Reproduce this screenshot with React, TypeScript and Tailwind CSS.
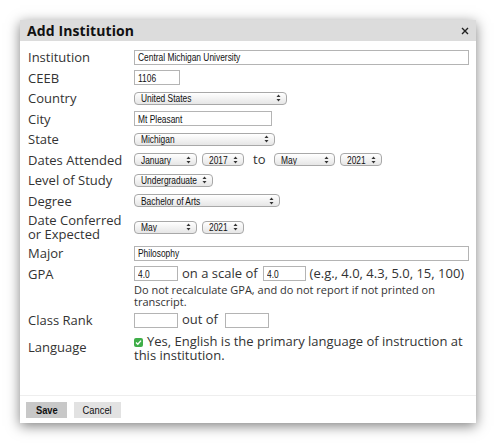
import React from 'react';

const labelFont = { fontFamily: '"Open Sans", "Liberation Sans", sans-serif' };

function Arrows() {
  return (
    <svg width="5" height="8" viewBox="0 0 5 8" className="shrink-0">
      <path d="M2.5 0.5 L4.5 3 L0.5 3 Z" fill="#333" />
      <path d="M2.5 7.5 L4.5 5 L0.5 5 Z" fill="#333" />
    </svg>
  );
}

function Select({ value, width }: { value: string; width: string }) {
  return (
    <div
      className={`${width} h-[13px] shrink-0 flex items-center pl-[6px] pr-[5px] rounded-[4px] border border-[#a8a8a8] bg-gradient-to-b from-white to-[#e6e6e6] text-[10.5px] leading-none text-[#111] font-['Liberation_Sans',Arial,sans-serif]`}
    >
      <div className="flex-1 min-w-0 overflow-hidden whitespace-nowrap">
        <span className="inline-block origin-left scale-x-[0.8]">{value}</span>
      </div>
      <Arrows />
    </div>
  );
}

function Input({ value, width }: { value?: string; width: string }) {
  return (
    <div
      className={`${width} h-[15px] shrink-0 flex items-center px-[3px] overflow-hidden whitespace-nowrap border border-[#b4b4b4] bg-white text-[10.5px] leading-none text-[#111] font-['Liberation_Sans',Arial,sans-serif]`}
    >
      <span className="inline-block origin-left scale-x-[0.8]">{value}</span>
    </div>
  );
}

function Row({ label, children, h = 'h-[20.5px]' }: { label: React.ReactNode; children: React.ReactNode; h?: string }) {
  return (
    <div className={`flex items-center ${h}`}>
      <div className="w-[106px] shrink-0 text-[13px] leading-[14px] text-[#333]" style={labelFont}>
        {label}
      </div>
      <div className="flex items-center">{children}</div>
    </div>
  );
}

export default function App() {
  return (
    <div className="w-[496px] h-[443px] bg-white pt-[20px] pl-[20px]">
      <div className="w-[456px] h-[403px] flex flex-col bg-white shadow-[0_3px_12px_rgba(0,0,0,0.5)]">
        {/* Header */}
        <div className="h-[21px] shrink-0 flex items-center justify-between pl-[7px] pr-[7px] bg-[#dcdcdc]">
          <span className="text-[14px] font-bold text-[#111] tracking-[0.1px]" style={labelFont}>
            Add Institution
          </span>
          <svg width="8" height="8" viewBox="0 0 8 8">
            <path d="M1 1 L7 7 M7 1 L1 7" stroke="#222" strokeWidth="1.4" />
          </svg>
        </div>

        {/* Body */}
        <div className="flex-1 pl-[8px] pt-[6px]">
          <Row label="Institution">
            <Input value="Central Michigan University" width="w-[335px]" />
          </Row>
          <Row label="CEEB">
            <Input value="1106" width="w-[46px]" />
          </Row>
          <Row label="Country">
            <Select value="United States" width="w-[153px]" />
          </Row>
          <Row label="City">
            <Input value="Mt Pleasant" width="w-[138px]" />
          </Row>
          <Row label="State">
            <Select value="Michigan" width="w-[141px]" />
          </Row>
          <Row label="Dates Attended">
            <div className="flex items-center gap-[5px]">
              <Select value="January" width="w-[63px]" />
              <Select value="2017" width="w-[42px]" />
              <span className="text-[13px] text-[#333] mx-[4px]" style={labelFont}>
                to
              </span>
              <Select value="May" width="w-[61px]" />
              <Select value="2021" width="w-[42px]" />
            </div>
          </Row>
          <Row label="Level of Study">
            <Select value="Undergraduate" width="w-[79px]" />
          </Row>
          <Row label="Degree">
            <Select value="Bachelor of Arts" width="w-[146px]" />
          </Row>
          <Row
            h="h-[32px]"
            label={
              <>
                Date Conferred
                <br />
                or Expected
              </>
            }
          >
            <div className="flex items-center gap-[5px]">
              <Select value="May" width="w-[63px]" />
              <Select value="2021" width="w-[42px]" />
            </div>
          </Row>
          <Row label="Major">
            <Input value="Philosophy" width="w-[335px]" />
          </Row>
          <Row label="GPA">
            <div className="flex items-center text-[13px] text-[#333]" style={labelFont}>
              <Input value="4.0" width="w-[44px]" />
              <span className="ml-[4px] mr-[5px]">on a scale of</span>
              <Input value="4.0" width="w-[43px]" />
              <span className="ml-[4px]">(e.g., 4.0, 4.3, 5.0, 15, 100)</span>
            </div>
          </Row>
          <div
            className="ml-[106px] w-[320px] text-[11px] leading-[12px] text-[#333]"
            style={labelFont}
          >
            Do not recalculate GPA, and do not report if not printed on transcript.
          </div>
          <Row label="Class Rank" h="h-[24px]">
            <div className="flex items-center text-[13px] text-[#333]" style={labelFont}>
              <Input width="w-[44px]" />
              <span className="ml-[4px] mr-[7px]">out of</span>
              <Input width="w-[44px]" />
            </div>
          </Row>
          <div className="flex items-center mt-[2px]">
            <div className="w-[106px] shrink-0 text-[13px] text-[#333]" style={labelFont}>
              Language
            </div>
            <div className="w-[332px] text-[13px] leading-[14px] text-[#333]" style={labelFont}>
              <span className="inline-flex items-center justify-center w-[9px] h-[9px] mr-[4px] rounded-[2px] bg-[#3fae49]">
                <svg width="7" height="7" viewBox="0 0 7 7">
                  <path d="M1 3.6 L2.8 5.3 L6 1.6" stroke="white" strokeWidth="1.4" fill="none" />
                </svg>
              </span>
              Yes, English is the primary language of instruction at this institution.
            </div>
          </div>
        </div>

        {/* Footer */}
        <div className="h-[28px] shrink-0 flex items-start gap-[7px] pl-[6px] pt-[6px] border-t border-[#eeeeee]">
          <button className="w-[41px] h-[16px] flex items-center justify-center bg-[#c8c8c8] text-[11px] font-bold text-[#111] font-['Liberation_Sans',Arial,sans-serif]">
            <span className="inline-block scale-x-[0.85]">Save</span>
          </button>
          <button className="w-[47px] h-[16px] flex items-center justify-center bg-[#e2e2e2] text-[11px] text-[#111] font-['Liberation_Sans',Arial,sans-serif]">
            <span className="inline-block scale-x-[0.85]">Cancel</span>
          </button>
        </div>
      </div>
    </div>
  );
}
